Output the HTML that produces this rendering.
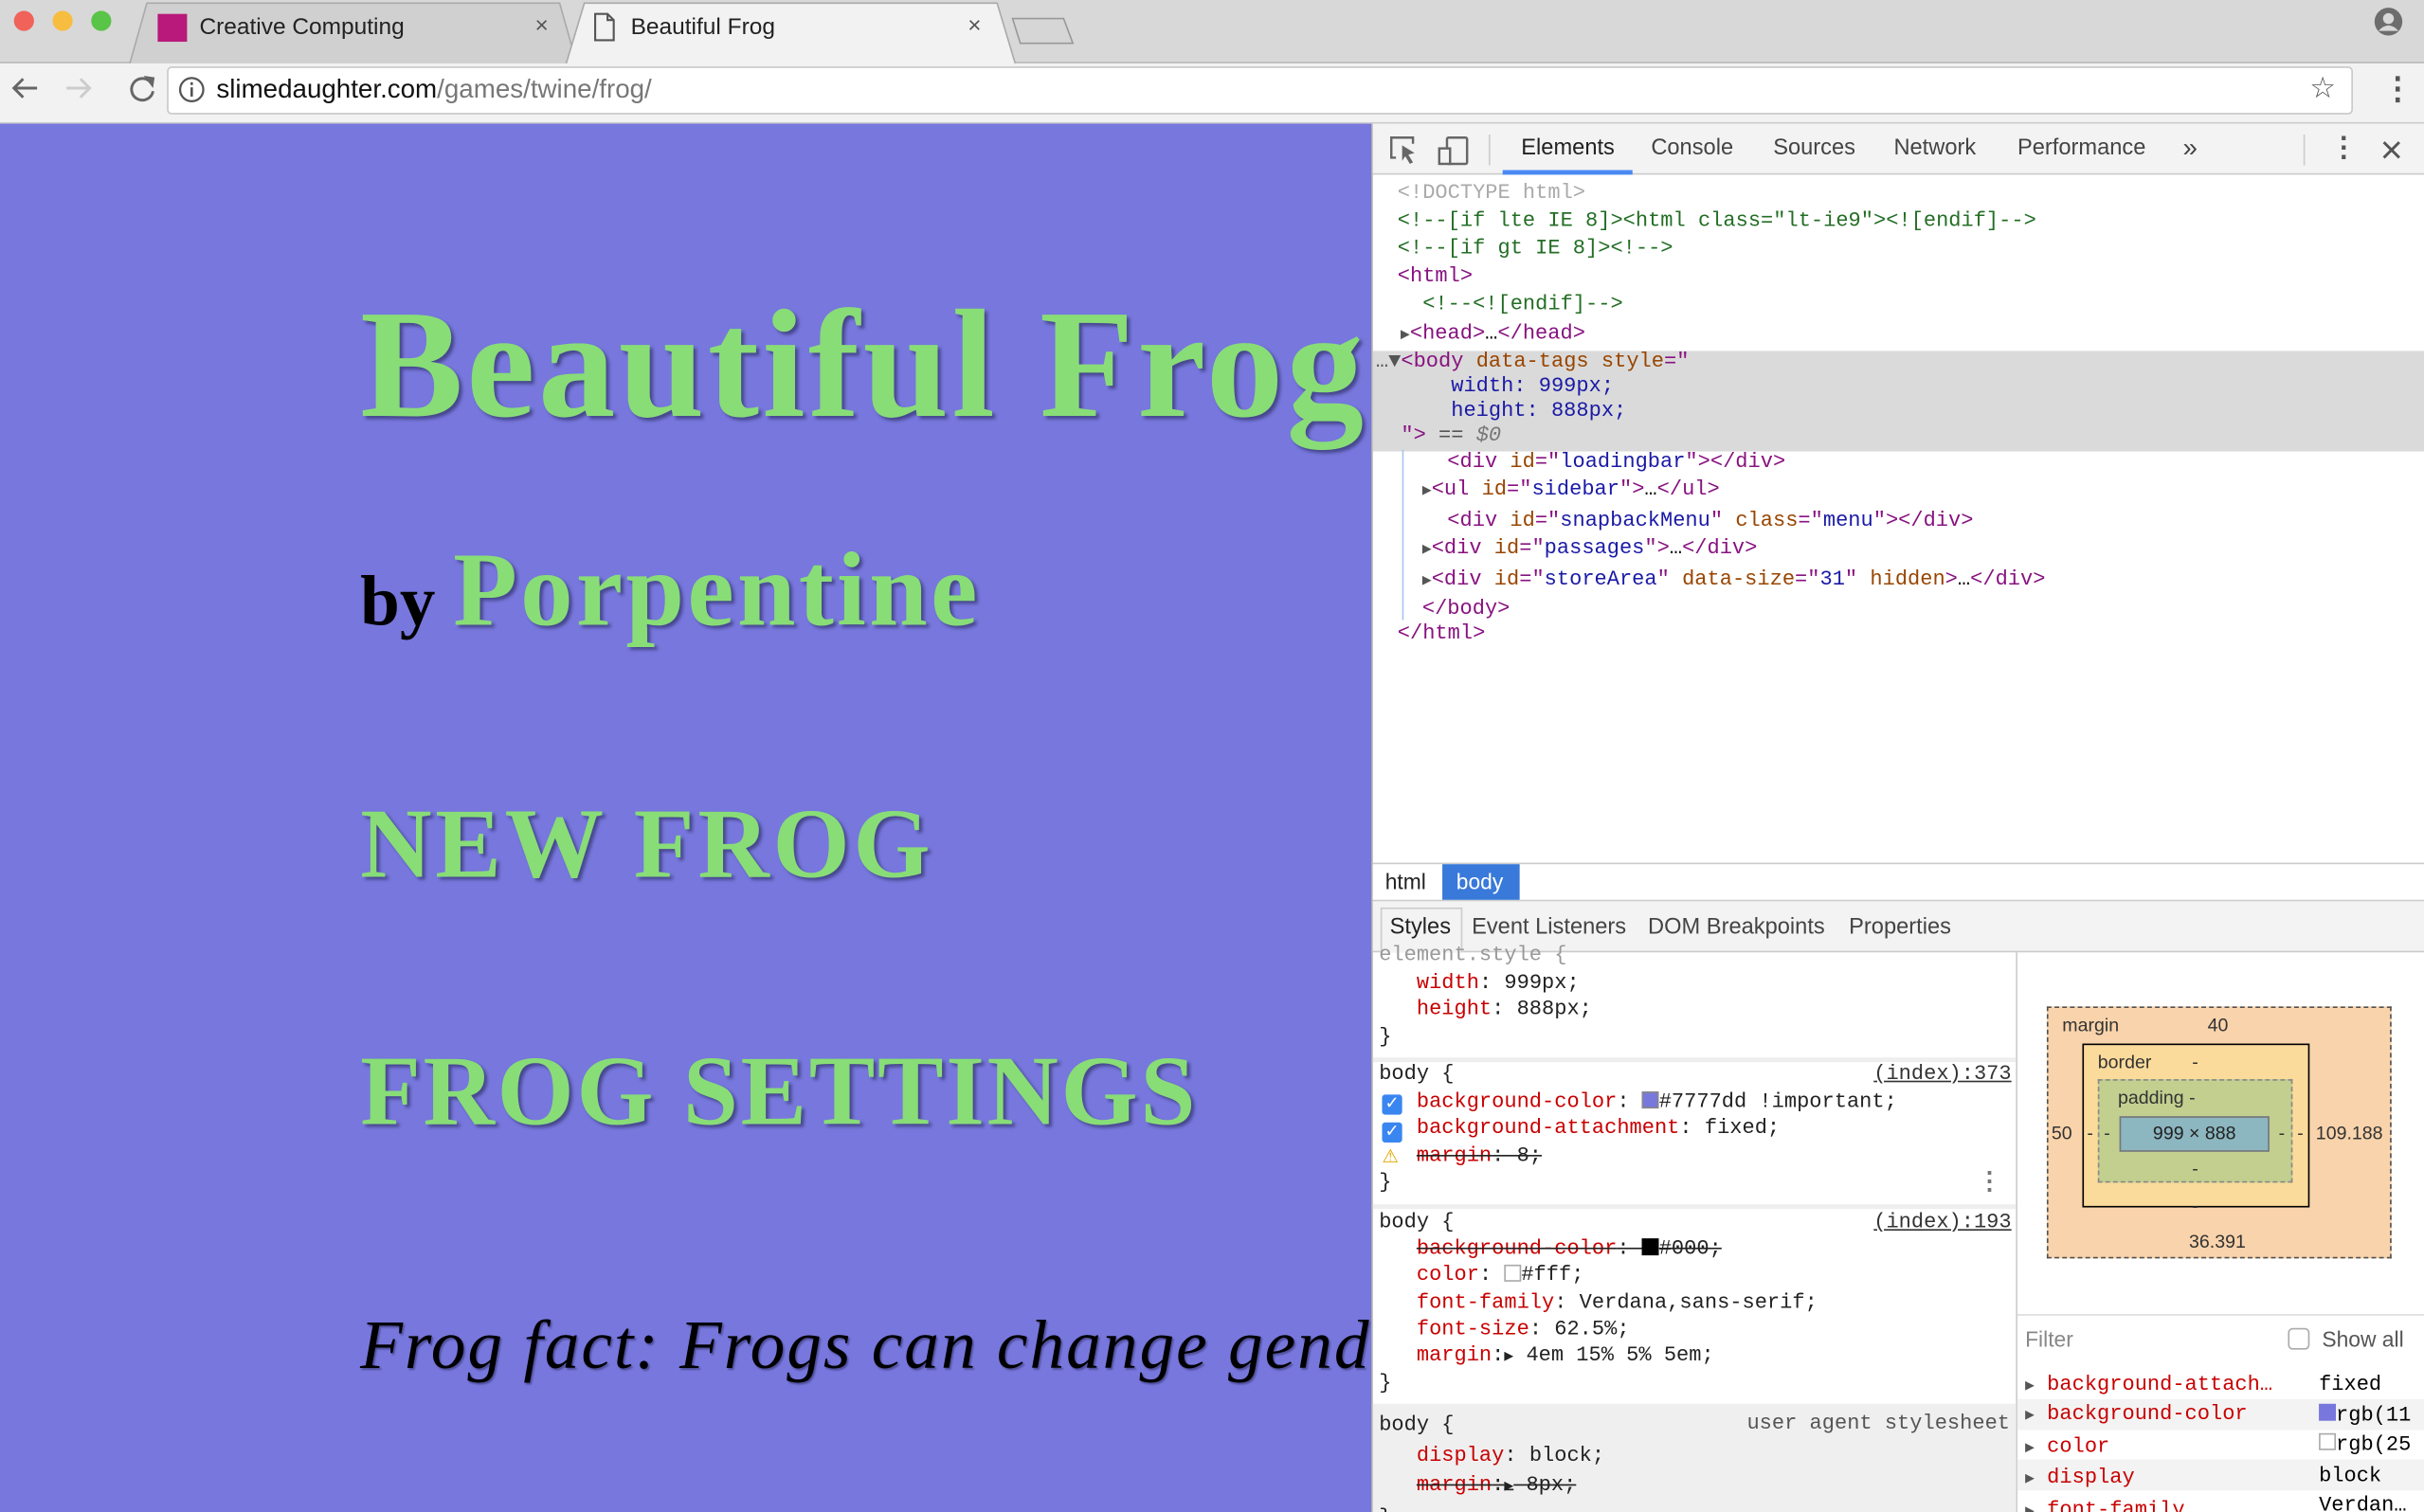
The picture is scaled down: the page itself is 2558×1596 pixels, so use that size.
<!DOCTYPE html>
<html><head><meta charset="utf-8">
<style>
*{margin:0;padding:0;box-sizing:border-box}
html,body{width:2558px;height:1596px;overflow:hidden;background:#fff}
#w{position:absolute;left:0;top:0;width:1568px;height:978px;transform:scale(1.63138,1.63190);transform-origin:0 0;font-family:"Liberation Sans",sans-serif;overflow:hidden}
.a{position:absolute}
.m{font-family:"Liberation Mono",monospace;font-size:13.5px;white-space:pre;line-height:18px}
.tag{color:#881280}.at{color:#994500}.av{color:#1a1aa6}.cm{color:#236e25}.gr{color:#aaa}
.pn{color:#c80000}
.g{color:#88dd77;text-shadow:2px 2px 2px rgba(40,40,90,.6);font-family:"Liberation Serif",serif;font-weight:bold}
</style></head><body><div id="w">
<!-- tab bar -->
<div class="a" style="left:0;top:0;width:1568px;height:41px;background:#d8d8d8;border-bottom:1px solid #b8b8b8"></div>
<div class="a" style="left:9px;top:7px;width:13px;height:13px;border-radius:50%;background:#f0625a"></div>
<div class="a" style="left:34px;top:7px;width:13px;height:13px;border-radius:50%;background:#f7bd40"></div>
<div class="a" style="left:59px;top:7px;width:13px;height:13px;border-radius:50%;background:#5ac448"></div>
<svg class="a" style="left:0;top:0" width="720" height="42"><path d="M84 41 L95 2 H362 L373 41" fill="#d0d0d0" stroke="#aaa"/><path d="M366 42 L378 2 H645 L657 42" fill="#f2f2f2" stroke="#aaa"/><path d="M655 12 H688 L694 28 H660 Z" fill="#d6d6d6" stroke="#999"/></svg>
<div class="a" style="left:102px;top:9px;width:19px;height:18px;background:#b8197a"></div>
<div class="a" style="left:129px;top:9px;font-size:15px;color:#222">Creative Computing</div>
<div class="a" style="left:346px;top:8px;font-size:15px;color:#555">×</div>
<svg class="a" style="left:383px;top:8px" width="16" height="20"><path d="M2 1H10L14 5V18H2Z M10 1V5H14" fill="none" stroke="#555" stroke-width="1.3"/></svg>
<div class="a" style="left:408px;top:9px;font-size:15px;color:#222">Beautiful Frog</div>
<div class="a" style="left:626px;top:8px;font-size:15px;color:#555">×</div>
<svg class="a" style="left:1535px;top:4px" width="20" height="20"><circle cx="10" cy="10" r="9" fill="#6d6d6d"/><circle cx="10" cy="8" r="3.5" fill="#d8d8d8"/><path d="M3.5 16 Q10 9 16.5 16" fill="#d8d8d8"/></svg>
<!-- toolbar -->
<div class="a" style="left:0;top:41px;width:1568px;height:39px;background:#f2f2f2;border-bottom:1px solid #ccc"></div>
<svg class="a" style="left:6px;top:48px" width="100" height="20"><path d="M18 9H3M9 3L3 9L9 15" fill="none" stroke="#666" stroke-width="1.8"/><path d="M37 9H52M46 3L52 9L46 15" fill="none" stroke="#ccc" stroke-width="1.8"/><path d="M92 6A7 7 0 1 0 93 11" fill="none" stroke="#666" stroke-width="1.8"/><path d="M87 1L94 2L93 9Z" fill="#666"/></svg>
<div class="a" style="left:108px;top:43px;width:1414px;height:31px;background:#fff;border:1px solid #c8c8c8;border-radius:3px"></div>
<svg class="a" style="left:115px;top:49px" width="18" height="18"><circle cx="9" cy="9" r="7.5" fill="none" stroke="#555" stroke-width="1.4"/><rect x="8.2" y="7.5" width="1.6" height="6" fill="#555"/><rect x="8.2" y="4.2" width="1.6" height="1.8" fill="#555"/></svg>
<div class="a" style="left:140px;top:48px;font-size:17px;color:#111">slimedaughter.com<span style="color:#777">/games/twine/frog/</span></div>
<div class="a" style="left:1494px;top:46px;font-size:19px;color:#555">☆</div>
<div class="a" style="left:1541px;top:45px;font-size:20px;color:#555;font-weight:bold">⋮</div>
<!-- page -->
<div class="a" style="left:0;top:80px;width:887px;height:898px;background:#7777dd;overflow:hidden">
 <div class="a g" style="left:233px;top:106px;font-size:100px;letter-spacing:2px;white-space:nowrap;line-height:1">Beautiful Frog</div>
 <div class="a" style="left:233px;top:267px;white-space:nowrap;font-family:'Liberation Serif',serif;line-height:1"><span style="font-size:46px;color:#000;font-weight:bold">by </span><span class="g" style="font-size:68px;letter-spacing:2px">Porpentine</span></div>
 <div class="a g" style="left:233px;top:434px;font-size:64px;letter-spacing:2.3px;white-space:nowrap;line-height:1">NEW FROG</div>
 <div class="a g" style="left:233px;top:594px;font-size:64px;letter-spacing:1.6px;white-space:nowrap;line-height:1">FROG SETTINGS</div>
 <div class="a" style="left:233px;top:768px;font-size:45px;letter-spacing:1.2px;white-space:nowrap;font-family:'Liberation Serif',serif;font-style:italic;color:#000;text-shadow:1px 1px 1px rgba(40,40,90,.5);line-height:1">Frog fact: Frogs can change gender</div>
</div>
<!-- devtools -->
<div class="a" style="left:887px;top:80px;width:681px;height:898px;background:#fff;border-left:1px solid #aaa"></div>
<div class="a" style="left:888px;top:80px;width:680px;height:33px;background:#f3f3f3;border-bottom:1px solid #ccc"></div>
<svg class="a" style="left:898px;top:86px" width="60" height="22"><path d="M5 16H2V3H16V7" fill="none" stroke="#666" stroke-width="1.5"/><path d="M9 8L17 13L13 14L16 19L14 20L11 15L9 18Z" fill="#666"/><rect x="38" y="3" width="13" height="17" rx="1" fill="none" stroke="#666" stroke-width="1.5"/><rect x="33" y="10" width="7" height="10" fill="#f3f3f3" stroke="#666" stroke-width="1.5"/></svg>
<div class="a" style="left:963px;top:87px;width:1px;height:20px;background:#ccc"></div>
<div class="a" style="left:972px;top:110px;width:84px;height:3px;background:#4a8af4"></div>
<div class="a" style="left:984px;top:88px;font-size:14.5px;color:#222">Elements</div>
<div class="a" style="left:1068px;top:88px;font-size:14.5px;color:#444">Console</div>
<div class="a" style="left:1147px;top:88px;font-size:14.5px;color:#444">Sources</div>
<div class="a" style="left:1225px;top:88px;font-size:14.5px;color:#444">Network</div>
<div class="a" style="left:1305px;top:88px;font-size:14.5px;color:#444">Performance</div>
<div class="a" style="left:1412px;top:86px;font-size:17px;color:#444">»</div>
<div class="a" style="left:1490px;top:87px;width:1px;height:20px;background:#ccc"></div>
<div class="a" style="left:1507px;top:85px;font-size:18px;color:#555;font-weight:bold">⋮</div>
<svg class="a" style="left:1540px;top:90px" width="14" height="14"><path d="M2 2L12 12M12 2L2 12" stroke="#555" stroke-width="1.8"/></svg>
<!-- DOM tree -->
<div class="a" style="left:888px;top:227px;width:680px;height:65px;background:#dadada"></div>
<div class="a" style="left:907px;top:291px;width:1px;height:110px;background:#a8c4ee"></div>
<div class="a m" style="left:904px;top:117px"><span class="gr">&lt;!DOCTYPE html&gt;</span>
<span class="cm">&lt;!--[if lte IE 8]&gt;&lt;html class="lt-ie9"&gt;&lt;![endif]--&gt;</span>
<span class="cm">&lt;!--[if gt IE 8]&gt;&lt;!--&gt;</span>
<span class="tag">&lt;html&gt;</span>
  <span class="cm">&lt;!--&lt;![endif]--&gt;</span>
</div>
<div class="a m" style="left:906px;top:208px"><span style="color:#555;font-size:10px">▶</span><span class="tag">&lt;head&gt;</span>…<span class="tag">&lt;/head&gt;</span></div>
<div class="a m" style="left:890px;top:227px;line-height:16px"><span style="color:#555">…▼</span><span class="tag">&lt;body</span> <span class="at">data-tags</span> <span class="at">style</span><span class="tag">="</span>
      <span class="av">width: 999px;</span>
      <span class="av">height: 888px;</span>
  <span class="tag">"&gt;</span> <span style="color:#555">==</span> <span style="color:#777;font-style:italic">$0</span></div>
<div class="a m" style="left:920px;top:291px;line-height:18.4px">  <span class="tag">&lt;div</span> <span class="at">id</span><span class="tag">="</span><span class="av">loadingbar</span><span class="tag">"&gt;&lt;/div&gt;</span>
<span style="color:#555;font-size:10px">▶</span><span class="tag">&lt;ul</span> <span class="at">id</span><span class="tag">="</span><span class="av">sidebar</span><span class="tag">"&gt;</span>…<span class="tag">&lt;/ul&gt;</span>
  <span class="tag">&lt;div</span> <span class="at">id</span><span class="tag">="</span><span class="av">snapbackMenu</span><span class="tag">"</span> <span class="at">class</span><span class="tag">="</span><span class="av">menu</span><span class="tag">"&gt;&lt;/div&gt;</span>
<span style="color:#555;font-size:10px">▶</span><span class="tag">&lt;div</span> <span class="at">id</span><span class="tag">="</span><span class="av">passages</span><span class="tag">"&gt;</span>…<span class="tag">&lt;/div&gt;</span>
<span style="color:#555;font-size:10px">▶</span><span class="tag">&lt;div</span> <span class="at">id</span><span class="tag">="</span><span class="av">storeArea</span><span class="tag">"</span> <span class="at">data-size</span><span class="tag">="</span><span class="av">31</span><span class="tag">"</span> <span class="at">hidden</span><span class="tag">&gt;</span>…<span class="tag">&lt;/div&gt;</span>
<span class="tag">&lt;/body&gt;</span></div>
<div class="a m" style="left:904px;top:402px"><span class="tag">&lt;/html&gt;</span></div>
<!-- breadcrumb -->
<div class="a" style="left:888px;top:558px;width:680px;height:25px;background:#fff;border-top:1px solid #ccc;border-bottom:1px solid #ccc"></div>
<div class="a" style="left:896px;top:562px;font-size:14px;color:#222">html</div>
<div class="a" style="left:933px;top:559px;width:50px;height:23px;background:#3879d9"></div>
<div class="a" style="left:942px;top:562px;font-size:14px;color:#fff">body</div>
<!-- style tabs -->
<div class="a" style="left:888px;top:583px;width:680px;height:33px;background:#f3f3f3;border-bottom:1px solid #ccc"></div>
<div class="a" style="left:893px;top:587px;width:53px;height:29px;background:#f3f3f3;border:1px solid #ccc;border-bottom:none"></div>
<div class="a" style="left:899px;top:592px;font-size:14.5px;color:#222">Styles</div>
<div class="a" style="left:952px;top:592px;font-size:14.5px;color:#444">Event Listeners</div>
<div class="a" style="left:1066px;top:592px;font-size:14.5px;color:#444">DOM Breakpoints</div>
<div class="a" style="left:1196px;top:592px;font-size:14.5px;color:#444">Properties</div>
<!-- styles pane -->
<div class="a" style="left:1304px;top:616px;width:1px;height:362px;background:#ccc"></div>
<div class="a" style="left:888px;top:684px;width:416px;height:3px;background:#eee"></div>
<div class="a" style="left:888px;top:779px;width:416px;height:3px;background:#eee"></div>
<div class="a" style="left:888px;top:908px;width:416px;height:70px;background:#efefef"></div>
<div class="a m" style="left:892px;top:610px;line-height:17.5px;color:#222"><span style="color:#999">element.style {</span>
   <span class="pn">width</span>: 999px;
   <span class="pn">height</span>: 888px;
}</div>
<div class="a m" style="left:892px;top:687px;line-height:17.5px;color:#222">body {
   <span class="pn">background-color</span>: <span style="display:inline-block;width:11px;height:11px;background:#7777dd;border:1px solid #888;vertical-align:-1px"></span>#7777dd !important;
   <span class="pn">background-attachment</span>: fixed;
   <span style="text-decoration:line-through"><span class="pn">margin</span>: 8;</span>
}</div>
<div class="a m" style="left:1212px;top:687px;color:#333;text-decoration:underline">(index):373</div>
<div class="a" style="left:894px;top:708px;width:13px;height:13px;background:#3a86f0;border-radius:2px;color:#fff;font-size:11px;line-height:13px;text-align:center">✓</div>
<div class="a" style="left:894px;top:726px;width:13px;height:13px;background:#3a86f0;border-radius:2px;color:#fff;font-size:11px;line-height:13px;text-align:center">✓</div>
<div class="a" style="left:894px;top:741px;font-size:12px;color:#e5a800">⚠</div>
<div class="a" style="left:1279px;top:754px;font-size:16px;color:#777;font-weight:bold">⋮</div>
<div class="a m" style="left:892px;top:783px;line-height:17.2px;color:#222">body {
   <span style="text-decoration:line-through"><span class="pn">background-color</span>: <span style="display:inline-block;width:11px;height:11px;background:#000;vertical-align:-1px"></span>#000;</span>
   <span class="pn">color</span>: <span style="display:inline-block;width:11px;height:11px;background:#fff;border:1px solid #aaa;vertical-align:-1px"></span>#fff;
   <span class="pn">font-family</span>: Verdana,sans-serif;
   <span class="pn">font-size</span>: 62.5%;
   <span class="pn">margin</span>:<span style="font-size:10px">▶</span> 4em 15% 5% 5em;
}</div>
<div class="a m" style="left:1212px;top:783px;color:#333;text-decoration:underline">(index):193</div>
<div class="a m" style="left:892px;top:913px;line-height:19.5px;color:#222">body {
   <span class="pn">display</span>: block;
   <span style="text-decoration:line-through"><span class="pn">margin</span>:<span style="font-size:10px">▶</span> 8px;</span>
}</div>
<div class="a m" style="left:1130px;top:913px;color:#555">user agent stylesheet</div>
<!-- box model -->
<div class="a" style="left:1324px;top:651px;width:223px;height:163px;background:#f9cc9d;opacity:.85;border:1px dashed #333"></div>
<div class="a" style="left:1347px;top:675px;width:147px;height:106px;background:#fbdb9b;border:1.5px solid #000"></div>
<div class="a" style="left:1357px;top:698px;width:126px;height:67px;background:#c3cf8f;border:1px dashed #888"></div>
<div class="a" style="left:1371px;top:722px;width:97px;height:23px;background:#8cb6c0;border:1px solid #777;font-size:12px;text-align:center;line-height:21px;color:#222">999 × 888</div>
<div class="a" style="left:1334px;top:656px;font-size:12px;color:#333">margin</div>
<div class="a" style="left:1428px;top:656px;font-size:12px;color:#333">40</div>
<div class="a" style="left:1357px;top:680px;font-size:12px;color:#333">border</div>
<div class="a" style="left:1418px;top:680px;font-size:12px;color:#333">-</div>
<div class="a" style="left:1370px;top:703px;font-size:12px;color:#333">padding -</div>
<div class="a" style="left:1327px;top:726px;font-size:12px;color:#333">50</div>
<div class="a" style="left:1350px;top:726px;font-size:12px;color:#333">-</div>
<div class="a" style="left:1361px;top:726px;font-size:12px;color:#333">-</div>
<div class="a" style="left:1474px;top:726px;font-size:12px;color:#333">-</div>
<div class="a" style="left:1486px;top:726px;font-size:12px;color:#333">-</div>
<div class="a" style="left:1498px;top:726px;font-size:12px;color:#333">109.188</div>
<div class="a" style="left:1418px;top:749px;font-size:12px;color:#333">-</div>
<div class="a" style="left:1418px;top:773px;font-size:12px;color:#333">-</div>
<div class="a" style="left:1416px;top:796px;font-size:12px;color:#333">36.391</div>
<!-- computed -->
<div class="a" style="left:1305px;top:850px;width:263px;height:1px;background:#ddd"></div>
<div class="a" style="left:1310px;top:858px;font-size:14px;color:#888">Filter</div>
<div class="a" style="left:1480px;top:859px;width:14px;height:14px;border:1px solid #aaa;border-radius:3px;background:#fff"></div>
<div class="a" style="left:1502px;top:858px;font-size:14px;color:#555">Show all</div>
<div class="a" style="left:1305px;top:905px;width:263px;height:20px;background:#f3f3f3"></div>
<div class="a" style="left:1305px;top:944px;width:263px;height:20px;background:#f3f3f3"></div>
<div class="a m" style="left:1310px;top:887px;line-height:19.5px"><span style="font-size:10px;color:#555">▶</span> <span class="pn">background-attach…</span></div>
<div class="a m" style="left:1310px;top:906px;line-height:19.5px"><span style="font-size:10px;color:#555">▶</span> <span class="pn">background-color</span>
<span style="font-size:10px;color:#555">▶</span> <span class="pn">color</span>
<span style="font-size:10px;color:#555">▶</span> <span class="pn">display</span>
<span style="font-size:10px;color:#555">▶</span> <span class="pn">font-family</span></div>
<div class="a m" style="left:1500px;top:887px;line-height:19.5px">fixed
<span style="display:inline-block;width:11px;height:11px;background:#7777dd"></span>rgb(11
<span style="display:inline-block;width:11px;height:11px;border:1px solid #aaa"></span>rgb(25
block
Verdan…</div>
</div></body></html>
